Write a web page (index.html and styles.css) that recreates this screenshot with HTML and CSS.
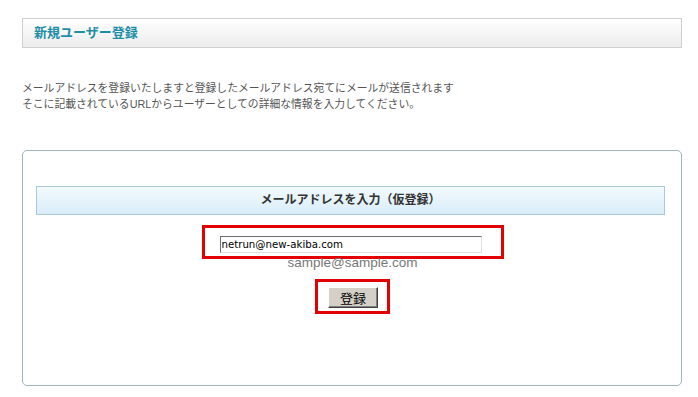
FILE: index.html
```html
<!DOCTYPE html>
<html lang="ja">
<head>
    <meta charset="UTF-8">
    <title>新規ユーザー登録</title>
    <link rel="stylesheet" href="styles.css">
</head>
<body>
    <div class="page">
        <h1 class="title-bar">新規ユーザー登録</h1>
        <p class="lead">
            メールアドレスを登録いたしますと登録したメールアドレス宛てにメールが送信されます<br>
            そこに記載されているURLからユーザーとしての詳細な情報を入力してください。
        </p>
        <div class="box">
            <div class="band">メールアドレスを入力（仮登録）</div>
            <form class="entry" onsubmit="return false;">
                <div class="mark mark-input">
                    <input type="text" class="mail" value="netrun@new-akiba.com">
                </div>
                <div class="sample">sample@sample.com</div>
                <div class="mark mark-button">
                    <button type="submit" class="submit">登録</button>
                </div>
            </form>
        </div>
    </div>
</body>
</html>
```

FILE: styles.css
```css
body {
    margin: 0;
    padding: 0;
    background: #fff;
    font-family: "Liberation Sans", "Noto Sans CJK JP", sans-serif;
    color: #444;
}
.page {
    width: 660px;
    padding: 18px 0 0 22px;
}
.title-bar {
    margin: 0;
    height: 28px;
    line-height: 28px;
    padding-left: 11px;
    border: 1px solid #cfcfcf;
    background: linear-gradient(to bottom, #ffffff, #ececec);
    font-size: 13px;
    font-weight: bold;
    color: #1e8ea6;
}
.lead {
    margin: 32px 0 0 0;
    font-size: 10.8px;
    line-height: 16px;
    color: #555;
}
.box {
    margin-top: 38px;
    height: 199px;
    padding: 35px 16px 0 13px;
    border: 1px solid #9fb4bb;
    border-radius: 5px;
}
.band {
    height: 27px;
    line-height: 27px;
    border: 1px solid #a9c9d8;
    background: linear-gradient(to bottom, #f2f9fd, #d9edf9);
    text-align: center;
    font-size: 12px;
    font-weight: bold;
    color: #333;
}
.entry {
    display: flex;
    flex-direction: column;
    align-items: center;
    margin: 10px 0 0 0;
    padding-left: 4px;
}
.mark {
    border: 3px solid #e30000;
}
.mark-input {
    padding: 6px 19px 3px 15px;
}
.mail {
    box-sizing: border-box;
    width: 262px;
    height: 17px;
    margin: 0;
    padding: 0 1px;
    border: 1px solid;
    border-color: #6e6e6e #e0e0e0 #e0e0e0 #6e6e6e;
    font-family: "DejaVu Sans", "Liberation Sans", sans-serif;
    font-size: 10.2px;
    color: #000;
    outline: none;
}
.sample {
    margin-top: -3px;
    font-size: 13.5px;
    line-height: 14px;
    color: #777;
}
.mark-button {
    margin-top: 9px;
    padding: 5px 9px 3px 10px;
}
.submit {
    width: 50px;
    height: 21px;
    margin: 0;
    padding: 0;
    background: #d4d0c8;
    border: 1px solid;
    border-color: #fff #404040 #404040 #fff;
    box-shadow: inset -1px -1px 0 #808080;
    font-family: "Noto Sans CJK JP", sans-serif;
    font-size: 13px;
    color: #000;
}
```
